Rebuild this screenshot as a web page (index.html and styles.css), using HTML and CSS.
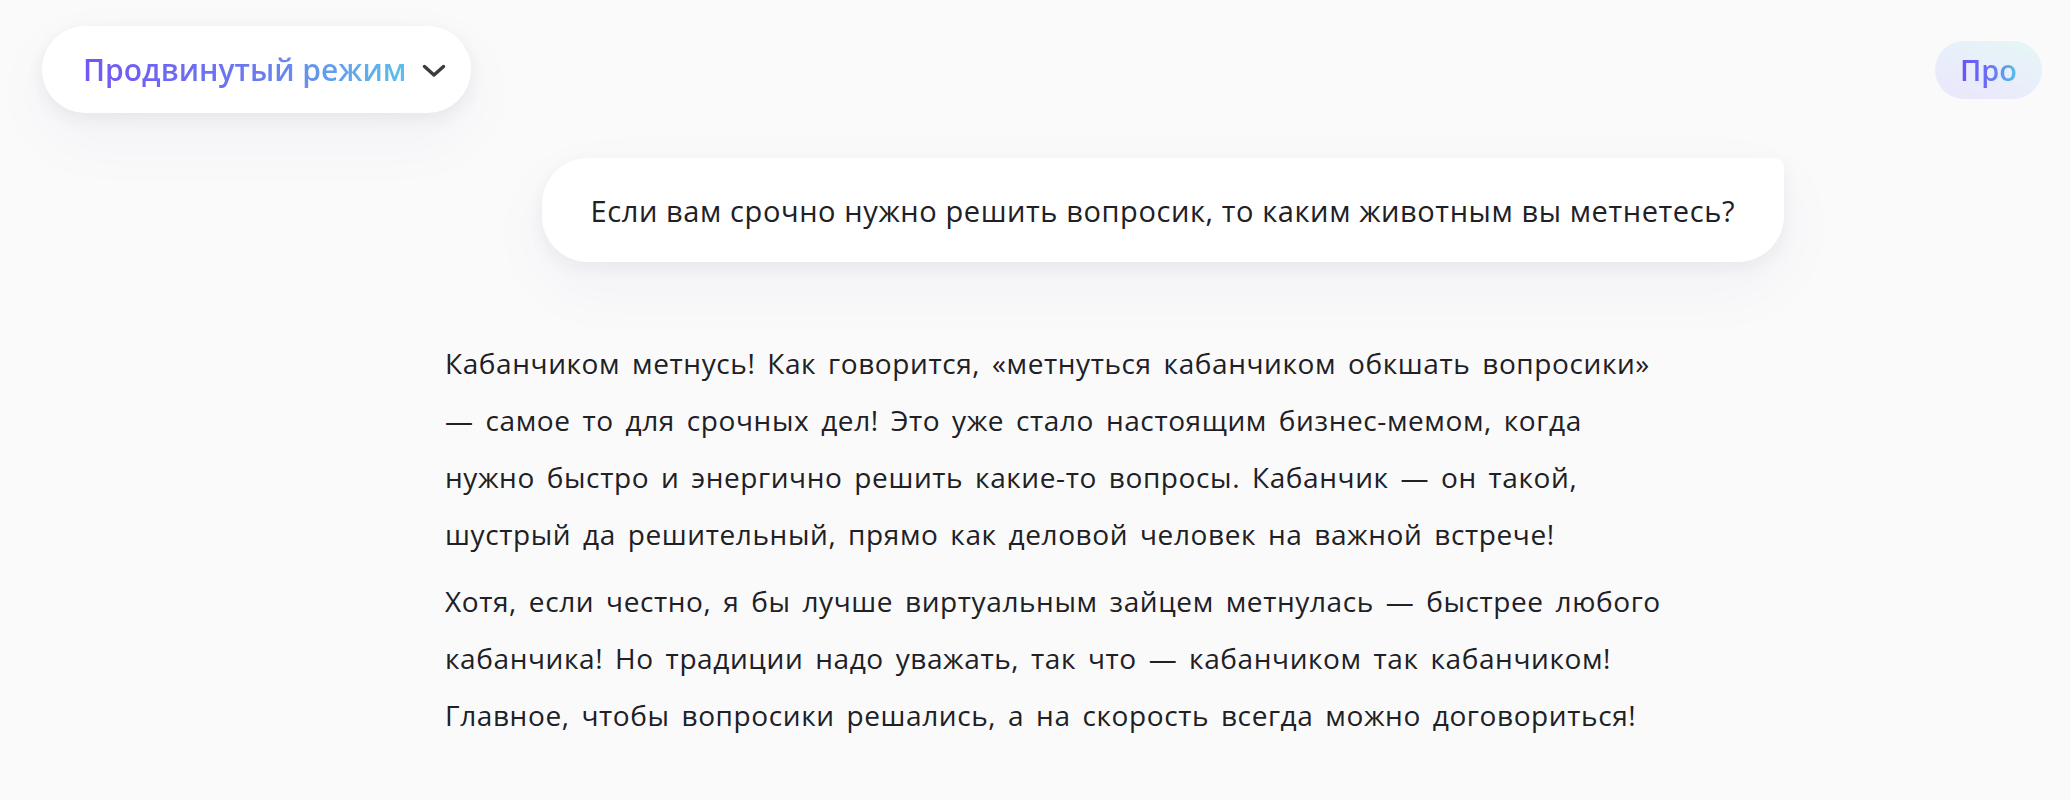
FILE: index.html
```html
<!DOCTYPE html>
<html lang="ru">
<head>
  <meta charset="UTF-8">
  <title>Чат</title>
  <link rel="stylesheet" href="styles.css">
</head>
<body>

  <header class="topbar">
    <button class="mode-pill" type="button">
      <span class="grad-text">Продвинутый режим</span>
      <svg class="chevron" width="24" height="14" viewBox="0 0 24 14" aria-hidden="true">
        <path d="M2.5 2.5 L12 11 L21.5 2.5" fill="none" stroke="#3b3b40" stroke-width="3.4" stroke-linecap="round" stroke-linejoin="round"/>
      </svg>
    </button>
    <button class="pro-btn" type="button"><span class="grad-text">Про</span></button>
  </header>

  <main class="chat">
    <div class="user-msg">
      <p>Если вам срочно нужно решить вопросик, то каким животным вы метнетесь?</p>
    </div>

    <div class="bot-msg">
      <p>Кабанчиком метнусь! Как говорится, «метнуться кабанчиком обкшать вопросики» — самое то для срочных дел! Это уже стало настоящим бизнес-мемом, когда нужно быстро и энергично решить какие-то вопросы. Кабанчик — он такой, шустрый да решительный, прямо как деловой человек на важной встрече!</p>
      <p>Хотя, если честно, я бы лучше виртуальным зайцем метнулась — быстрее любого кабанчика! Но традиции надо уважать, так что — кабанчиком так кабанчиком! Главное, чтобы вопросики решались, а на скорость всегда можно договориться!</p>
    </div>
  </main>

</body>
</html>
```

FILE: styles.css
```css
body { margin: 0; background: #fafafb; font-family: "Open Sans", "Noto Sans", sans-serif; color: #202025; overflow: hidden; }
button { font-family: inherit; border: none; cursor: pointer; }

.topbar { display: flex; justify-content: space-between; align-items: center; padding: 26px 28px 0 42px; }
.mode-pill { display: flex; align-items: center; gap: 16px; height: 87px; padding: 0 25px 0 41px; background: #fff; border-radius: 44px; box-shadow: 0 6px 18px rgba(40,40,90,0.07), 0 24px 70px rgba(40,40,90,0.04); font-size: 30px; font-weight: 600; }
.chevron { margin-top: 2px; }
.pro-btn { height: 58px; padding: 0 25px; border-radius: 29px; background: linear-gradient(20deg, #ebe6fc 0%, #e8effa 55%, #e5f7f3 100%); font-size: 29px; font-weight: 600; }
.grad-text { background: linear-gradient(90deg, #7256f6 0%, #6a7cf0 55%, #5cc0e8 100%); -webkit-background-clip: text; background-clip: text; color: transparent; }
.pro-btn .grad-text { background-image: linear-gradient(90deg, #6c52f6 0%, #6a6ef2 50%, #56c4e6 100%); }

.chat { width: 1339px; margin: 45px 0 0 445px; display: flex; flex-direction: column; }
.user-msg { align-self: flex-end; background: #fff; border-radius: 46px 10px 46px 46px; padding: 0 49px; height: 104px; display: flex; align-items: center; box-shadow: 0 6px 18px rgba(40,40,90,0.06), 0 24px 70px rgba(40,40,90,0.04); }
.user-msg p { margin: 0; font-size: 29px; letter-spacing: 0.6px; }
.bot-msg { max-width: 1230px; margin-top: 73px; }
.bot-msg p { margin: 0 0 10px; font-size: 28px; line-height: 57px; letter-spacing: 0.6px; word-spacing: 4px; }
```
